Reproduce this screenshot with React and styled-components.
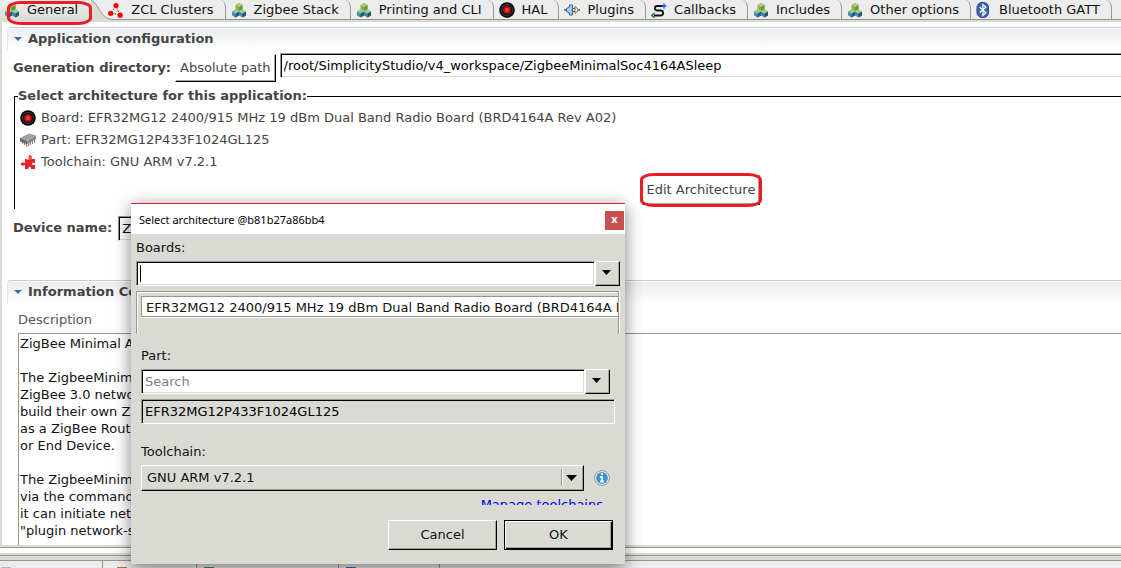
import React from "react";
import styled, { createGlobalStyle, css } from "styled-components";

const GlobalStyle = createGlobalStyle`
  *, *::before, *::after { box-sizing: border-box; }
  body {
    margin: 0;
    background: #ffffff;
    color: #111111;
    font-family: "DejaVu Sans", sans-serif;
    font-size: 13px;
    line-height: 16px;
    overflow: hidden;
  }
  button, input, select, textarea {
    font: inherit;
    font-weight: normal;
    color: inherit;
    border-radius: 0;
  }
`;

const face = "#dadad5";

const ring = css`
  position: relative;
  &::after {
    content: "";
    position: absolute;
    border: 3px solid #ed1c24;
    border-radius: 14px / 7px;
    pointer-events: none;
  }
`;

const sunken = css`
  border: 1px solid;
  border-color: #9a978f #ffffff #ffffff #9a978f;
  box-shadow: inset 1px 1px 0 #000000, inset -1px -1px 0 ${face};
`;

const raised = css`
  border: 1px solid;
  border-color: #ffffff #000000 #000000 #ffffff;
  box-shadow: inset -1px -1px 0 #a5a298;
`;

const Page = styled.div`
  display: flex;
  flex-direction: column;
  height: 100vh;
  overflow: hidden;
`;

const TabBar = styled.nav`
  display: flex;
  flex: none;
  position: relative;
  z-index: 1;
  height: 22px;
  background: #ececec;
  border-bottom: 2px solid ${face};
`;

const Tab = styled.button`
  display: flex;
  align-items: center;
  flex: none;
  gap: 7px;
  height: 20px;
  padding: 0 11px 0 5px;
  border: 0;
  border-right: 1px solid #9a9689;
  border-bottom: 1px solid #9a9689;
  border-top-right-radius: 6px 8px;
  background: #ececec;
  white-space: nowrap;
`;

const ActiveTab = styled(Tab)`
  ${ring}
  height: 22px;
  padding: 0 13px 3px 4px;
  border: 0;
  background: linear-gradient(#f0f0ee, ${face});
  z-index: 2;
  &::after { left: 7px; top: 1px; width: 85px; height: 24px; }
`;

const TabFiller = styled.div`
  flex: 1;
  height: 20px;
  border-bottom: 1px solid #9a9689;
`;

const Slope = styled.svg`
  flex: none;
  width: 12px;
  height: 22px;
  overflow: visible;
  position: relative;
  z-index: 1;
`;

const Icon = styled.svg`
  flex: none;
  width: 16px;
  height: 16px;
`;

const Editor = styled.main`
  display: flex;
  flex-direction: column;
  flex: 1;
  min-height: 0;
  padding: 5px 0 0 5px;
  border-left: 2px solid ${face};
`;

const SectionHeader = styled.h2`
  display: flex;
  align-items: center;
  flex: none;
  gap: 6px;
  margin: 0;
  height: 24px;
  padding: 0 0 1px 6px;
  border-top: 1px solid #c5ccd4;
  border-left: 1px solid #e4e8ec;
  border-top-left-radius: 4px;
  background: linear-gradient(#e9edf0, #ffffff);
  box-shadow: inset 0 1px 0 #ffffff;
  color: #444444;
  font-size: 13px;
`;

const Row = styled.div`
  display: flex;
  align-items: center;
  flex: none;
  gap: 6px;
  padding-left: 6px;
  font-weight: bold;
  color: #444444;
`;

const DirectoryRow = styled(Row)`
  gap: 4px;
  height: 30px;
  margin: 2px -2px 0 0;
  input { align-self: flex-start; }
`;

const DeviceRow = styled(Row)`
  height: 24px;
  margin: 7px 0 40px;
  input { max-width: 240px; }
`;

const PushButton = styled.button`
  height: 28px;
  padding: 0 4px;
  background: #ffffff;
  color: #444444;
  ${raised}
`;

const EditButton = styled(PushButton)`
  ${ring}
  display: block;
  height: 30px;
  margin: 2px 0 0 calc(50% + 71px);
  &::after { inset: -3px; }
`;

const Field = styled.input`
  flex: 1;
  min-width: 0;
  height: 25px;
  padding: 0 3px;
  background: ${(p) => (p.readOnly ? face : "#ffffff")};
  color: #000000;
  outline: none;
  ${sunken}
  &::placeholder { color: #808080; opacity: 1; }
`;

const ArchitectureGroup = styled.fieldset`
  flex: none;
  min-width: 0;
  height: 121px;
  margin: 5px 0 0 7px;
  padding: 3px 0 0 5px;
  border: 0 solid #000000;
  border-width: 1px 0 0 1px;
  color: #444444;
`;

const GroupLegend = styled.legend`
  padding: 0;
  margin-left: -2px;
  font-weight: bold;
`;

const PartList = styled.ul`
  margin: 0;
  padding: 0;
  list-style: none;
`;

const PartItem = styled.li`
  display: flex;
  align-items: center;
  gap: 5px;
  height: 22px;
`;

const Description = styled.label`
  flex: none;
  margin: 8px 0 5px 11px;
  color: #555555;
`;

const DescriptionText = styled.textarea`
  flex: 1;
  min-height: 0;
  margin-left: 11px;
  padding: 1px;
  border: 0 solid #9a9689;
  border-width: 1px 0 0 1px;
  line-height: 17px;
  resize: none;
  outline: none;
  overflow: hidden;
  white-space: pre;
`;

const Sash = styled.div`
  flex: none;
  height: 16px;
  border-top: 2px solid ${face};
  border-bottom: 1px solid #9a9689;
  background: linear-gradient(
    #9a9689 0 1px, #ffffff 1px 6px, ${face} 6px 8px,
    #9a9689 8px 9px, ${face} 9px
  );
`;

const LowerTabs = styled.div`
  display: flex;
  flex: none;
  height: 7px;
  background: #ececec;
  overflow: hidden;
`;

const LowerTab = styled.div`
  flex: none;
  width: ${(p) => p.$width}px;
  padding: 5px 0 0 ${(p) => p.$indent}px;
  border-right: 1px solid #9a9689;
  svg { display: block; width: 12px; height: 2px; }
`;

const Dialog = styled.section`
  position: absolute;
  left: 131px;
  top: 203px;
  width: 494px;
  border-top: 1px solid #d9222a;
  background: ${face};
  color: #111111;
  box-shadow: 0 4px 16px rgba(0, 0, 0, 0.5);
  z-index: 2;
`;

const TitleBar = styled.header`
  display: flex;
  align-items: center;
  justify-content: space-between;
  height: 30px;
  padding: 2px 1px 0 8px;
  background: #ffffff;
  color: #000000;
  font-family: "Noto Sans", sans-serif;
  font-size: 11px;
`;

const CloseButton = styled.button`
  width: 19px;
  height: 19px;
  padding: 0 0 2px;
  border: 0;
  background: #c75050;
  color: #ffffff;
  font-weight: bold;
  line-height: 14px;
`;

const DialogBody = styled.div`
  padding: 6px 5px 14px;
`;

const Indented = styled.div`
  padding: 14px 5px 0;
`;

const Label = styled.label`
  display: block;
  height: 16px;
`;

const Combo = styled.div`
  display: flex;
  position: relative;
  margin: 5px ${(p) => p.$right}px 5px 0;
`;

const Caret = styled.i`
  position: absolute;
  left: 4px;
  top: 4px;
  width: 1px;
  height: 17px;
  background: #000000;
`;

const DropButton = styled.button`
  display: flex;
  align-items: center;
  justify-content: center;
  width: 25px;
  height: 25px;
  padding: 0 2px 2px 0;
  background: ${face};
  ${raised}
  svg { width: 9px; height: 5px; }
`;

const BoardList = styled.div`
  height: 43px;
  margin-right: 1px;
  padding: 4px 0 0 4px;
  border: 1px solid #9a9689;
  border-bottom: 0;
  box-shadow: inset 1px 1px 0 #ffffff, 1px 0 0 #ffffff;
  overflow: hidden;
`;

const BoardOption = styled.div`
  height: 21px;
  padding: 3px 4px 0;
  border: 1px solid #9a9689;
  border-right: 0;
  background: #ffffff;
  box-shadow: 0 1px 0 #ffffff;
  white-space: nowrap;
  overflow: hidden;
`;

const FullField = styled(Field)`
  display: block;
  width: 100%;
`;

const ToolchainBlock = styled.div`
  margin-top: 20px;
`;

const ToolchainRow = styled.div`
  display: flex;
  align-items: center;
  gap: 10px;
  margin-top: 5px;
  padding-right: 5px;
`;

const SelectWrap = styled.div`
  display: flex;
  flex: 1;
  position: relative;
  svg {
    position: absolute;
    right: 6px;
    top: 4px;
    width: 17px;
    height: 17px;
    pointer-events: none;
  }
`;

const Select = styled.select`
  appearance: none;
  width: 100%;
  height: 26px;
  padding: 0 5px;
  background: ${face};
  outline: none;
  ${raised}
`;

const LinkClip = styled.div`
  height: 8px;
  margin: 6px 12px 0 0;
  overflow: hidden;
  text-align: right;
`;

const Link = styled.a`
  color: #0000ee;
`;

const Actions = styled.footer`
  display: flex;
  justify-content: flex-end;
  gap: 7px;
  padding: 15px 7px 0 0;
`;

const ActionButton = styled.button`
  width: 109px;
  height: 30px;
  padding: 0 0 1px;
  background: ${face};
  ${raised}
  ${(p) =>
    p.$default &&
    css`
      border-color: #000000;
      box-shadow: inset 1px 1px 0 #ffffff, inset -1px -1px 0 #000000, inset -2px -2px 0 #a5a298;
    `}
`;

const Cube = ({ x, y, top, left, right }) => (
  <g transform={`translate(${x} ${y})`}>
    <path d="M0 2 3.500 0 7 2v4L3.500 8 0 6z" fill={left} />
    <path d="M3.500 4 7 2v4L3.500 8z" fill={right} />
    <path d="M0 2 3.500 0 7 2 3.500 4z" fill={top} />
  </g>
);

const CubesIcon = () => (
  <Icon viewBox="0 0 16 16" aria-hidden="true">
    <Cube x="4.500" y="1" top="#b3d05f" left="#86b353" right="#5d9455" />
    <Cube x="1" y="7.500" top="#a4c96a" left="#4b90b4" right="#215a8c" />
    <Cube x="8" y="7.500" top="#aed05c" left="#4589b2" right="#1f5484" />
  </Icon>
);

const ClustersIcon = () => (
  <Icon viewBox="0 0 16 16" aria-hidden="true">
    <path d="M8 4 3 11l9 2z" fill="none" stroke="#444" strokeWidth=".8" strokeDasharray="2 1" />
    <circle cx="8" cy="3.500" r="2.600" fill="#f00" />
    <circle cx="2.700" cy="11.300" r="2.600" fill="#f00" />
    <circle cx="12.200" cy="13.200" r="2.600" fill="#f00" />
  </Icon>
);

const HalIcon = () => (
  <Icon viewBox="0 0 16 16" aria-hidden="true">
    <circle cx="8" cy="8" r="7.800" fill="#0a0a0a" />
    <circle cx="8" cy="8" r="5.600" fill="none" stroke="#484848" strokeWidth=".8" />
    <circle cx="8" cy="8" r="4" fill="#a80f0f" />
    <circle cx="8" cy="8" r="2.200" fill="#ff3030" />
  </Icon>
);

const PluginIcon = () => (
  <Icon viewBox="0 0 16 16" aria-hidden="true">
    <path d="M0 8h4M14 8h2" stroke="#5b7ba3" strokeWidth="2" />
    <path d="M2.500 6.500l2-1V5h1V3h3v10h-3v-2h-1v-.5l-2-1z" fill="#a9cbea" stroke="#315f9b" />
    <path d="M9 6.500h2M9 9.500h2" stroke="#315f9b" />
    <path d="M11 4.500 14 7v2l-3 2.500z" fill="#f2e8bd" stroke="#81764d" />
  </Icon>
);

const CallbackIcon = () => (
  <Icon viewBox="0 0 16 16" aria-hidden="true">
    <path
      d="M12 4H6.500C3 4 3 8.500 6.500 8.500h3c3.500 0 3.500 5 0 5H3"
      fill="none"
      stroke="#111"
      strokeWidth="1.800"
    />
    <path d="M13 1.500v5M10.500 4H15.500" fill="none" stroke="#1450ff" strokeWidth="1.300" />
    <path d="M3.500 11 .8 13.500l2.700 2.200" fill="none" stroke="#0a7a16" strokeWidth="1.300" />
  </Icon>
);

const BluetoothIcon = () => (
  <Icon viewBox="0 0 16 16" aria-hidden="true">
    <rect x="1" y=".5" width="11.500" height="15" rx="5" fill="#3967ad" stroke="#1e438a" />
    <path d="M3.700 5.200l6.200 5.300-3 3v-11l3 2.700-6.200 5.300" fill="none" stroke="#fff" strokeWidth="1.200" />
  </Icon>
);

const ChipIcon = () => (
  <Icon viewBox="0 0 16 16" aria-hidden="true">
    <path d="M2.500 9v3M4.500 10v3M6.500 11v4M8.500 10v4M10.500 9v4M12.500 8v4M14.500 7v4" stroke="#b07a58" />
    <path d="M0 6 9 1.500l7 2L7.500 9z" fill="#a3a3a3" />
    <path d="M0 6l7.500 3v3.500L0 9.500z" fill="#6b6b6b" />
    <path d="M7.500 9 16 3.500V7l-8.500 5.500z" fill="#858585" />
  </Icon>
);

const PuzzleIcon = () => (
  <Icon viewBox="0 0 16 16" aria-hidden="true">
    <path
      d="M5 5h4C6.500 0 13.500 0 11.500 5H15v4c-4-1.500-4 3 0 2v4h-4c.5-3-3-3-2.500 0H5v-4c-5 3-6-4.500 0-2z"
      fill="#e4252d"
    />
    <path d="M6 5.500h3.500C8 2 12 2 11 5.500" fill="none" stroke="#ff7a72" />
  </Icon>
);

const InfoIcon = () => (
  <Icon viewBox="0 0 16 16" role="img" aria-label="Toolchain information">
    <circle cx="8" cy="8" r="7.400" fill="#f4f4f4" stroke="#929292" />
    <circle cx="8" cy="8" r="5.900" fill="#3f91d8" />
    <path d="M7 4h2M6 7h2v4M6 11.500h4" fill="none" stroke="#fff" strokeWidth="1.800" />
  </Icon>
);

const Arrow = () => (
  <svg viewBox="0 0 9 5" aria-hidden="true">
    <path d="M0 0h9L4.500 5z" fill="#000" />
  </svg>
);

const Twistie = () => (
  <svg width="8" height="4" viewBox="0 0 8 4" aria-hidden="true">
    <path d="M0 0h8L4 4z" fill="#42698f" />
  </svg>
);

const tabs = [
  ["ZCL Clusters", ClustersIcon],
  ["Zigbee Stack", CubesIcon],
  ["Printing and CLI", CubesIcon],
  ["HAL", HalIcon],
  ["Plugins", PluginIcon],
  ["Callbacks", CallbackIcon],
  ["Includes", CubesIcon],
  ["Other options", CubesIcon],
  ["Bluetooth GATT", BluetoothIcon],
];

const parts = [
  ["Board: EFR32MG12 2400/915 MHz 19 dBm Dual Band Radio Board (BRD4164A Rev A02)", HalIcon],
  ["Part: EFR32MG12P433F1024GL125", ChipIcon],
  ["Toolchain: GNU ARM v7.2.1", PuzzleIcon],
];

const lowerTabs = [
  [103, 0, "#a9bcc5"],
  [94, 13, "#9b7a45"],
  [142, 6, "#4b8a55"],
  [101, 6, "#3b68a8"],
];

const description = `ZigBee Minimal A

The ZigbeeMinim
ZigBee 3.0 netwo
build their own Z
as a ZigBee Route
or End Device.

The ZigbeeMinim
via the command
it can initiate net
"plugin network-s`;

function SelectArchitectureDialog() {
  return (
    <Dialog role="dialog" aria-labelledby="dialog-title">
      <TitleBar>
        <span id="dialog-title">Select architecture @b81b27a86bb4</span>
        <CloseButton aria-label="Close">x</CloseButton>
      </TitleBar>
      <DialogBody>
        <Label htmlFor="boards">Boards:</Label>
        <Combo $right={0}>
          <Field id="boards" />
          <Caret />
          <DropButton aria-label="Show boards"><Arrow /></DropButton>
        </Combo>
        <BoardList role="listbox" aria-label="Boards">
          <BoardOption role="option" aria-selected="true">
            EFR32MG12 2400/915 MHz 19 dBm Dual Band Radio Board (BRD4164A Rev A02)
          </BoardOption>
        </BoardList>
        <Indented>
          <Label htmlFor="part">Part:</Label>
          <Combo $right={5}>
            <Field id="part" placeholder="Search" />
            <DropButton aria-label="Show parts"><Arrow /></DropButton>
          </Combo>
          <FullField readOnly aria-label="Selected part" defaultValue="EFR32MG12P433F1024GL125" />
          <ToolchainBlock>
            <Label htmlFor="toolchain">Toolchain:</Label>
            <ToolchainRow>
              <SelectWrap>
                <Select id="toolchain">
                  <option>GNU ARM v7.2.1</option>
                </Select>
                <svg viewBox="0 0 17 17" aria-hidden="true">
                  <path d="M0.500 0v17" stroke="#9a9689" />
                  <path d="M1.500 0v17" stroke="#fff" />
                  <path d="M5 6h11l-5.500 6z" fill="#000" />
                </svg>
              </SelectWrap>
              <InfoIcon />
            </ToolchainRow>
            <LinkClip>
              <Link href="#toolchains">Manage toolchains</Link>
            </LinkClip>
          </ToolchainBlock>
        </Indented>
        <Actions>
          <ActionButton>Cancel</ActionButton>
          <ActionButton $default>OK</ActionButton>
        </Actions>
      </DialogBody>
    </Dialog>
  );
}

export default function App() {
  return (
    <>
      <GlobalStyle />
      <Page>
        <TabBar>
          <ActiveTab>
            <CubesIcon />
            General
          </ActiveTab>
          <Slope viewBox="0 0 12 22" aria-hidden="true">
            <path d="M0 0c9 5 9 19 22 19.500V22H0z" fill={face} />
            <path d="M0 0c9 5 9 19 22 19.500" fill="none" stroke="#9a9689" />
          </Slope>
          {tabs.map(([name, TabIcon]) => (
            <Tab key={name}>
              <TabIcon />
              {name}
            </Tab>
          ))}
          <TabFiller />
        </TabBar>

        <Editor>
          <SectionHeader><Twistie />Application configuration</SectionHeader>
          <DirectoryRow>
            <label htmlFor="directory">Generation directory:</label>
            <PushButton>Absolute path</PushButton>
            <Field
              id="directory"
              defaultValue="/root/SimplicityStudio/v4_workspace/ZigbeeMinimalSoc4164ASleep"
            />
          </DirectoryRow>
          <ArchitectureGroup>
            <GroupLegend>Select architecture for this application:</GroupLegend>
            <PartList>
              {parts.map(([text, PartIcon]) => (
                <PartItem key={text}>
                  <PartIcon />
                  {text}
                </PartItem>
              ))}
            </PartList>
            <EditButton>Edit Architecture</EditButton>
          </ArchitectureGroup>
          <DeviceRow>
            <label htmlFor="device">Device name:</label>
            <Field id="device" defaultValue="ZigbeeMinimalSoc" />
          </DeviceRow>
          <SectionHeader>
            <Twistie />
            Information Configuration
          </SectionHeader>
          <Description htmlFor="description">Description</Description>
          <DescriptionText id="description" readOnly defaultValue={description} />
        </Editor>

        <Sash />
        <LowerTabs>
          {lowerTabs.map(([width, indent, color]) => (
            <LowerTab key={width} $width={width} $indent={indent}>
              <svg viewBox="0 0 12 2" aria-hidden="true">
                <path d="M1 2V1h10v1z" fill={color} />
              </svg>
            </LowerTab>
          ))}
        </LowerTabs>
      </Page>
      <SelectArchitectureDialog />
    </>
  );
}
